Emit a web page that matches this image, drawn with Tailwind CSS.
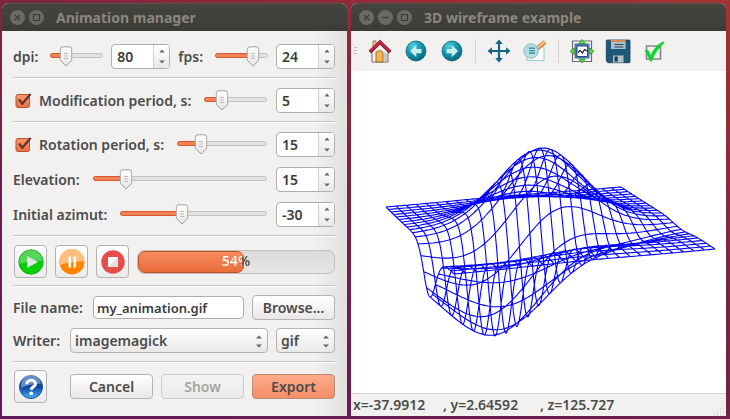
<!DOCTYPE html>
<html lang="en">
<head>
<meta charset="utf-8">
<title>Animation manager</title>
<script src="https://cdn.jsdelivr.net/npm/@tailwindcss/browser@4"></script>
</head>
<body class="flex min-h-screen gap-1 bg-[linear-gradient(20deg,#5f1a5c_0%,#6c1f4d_35%,#7d2540_60%,#a5322f_100%)] pt-[3px] pr-1 pb-1 pl-[2px] font-['Noto_Sans',sans-serif] text-[14px] leading-5 font-semibold text-[#4c4c4c]">

<svg class="absolute size-0" aria-hidden="true">
  <defs>
    <linearGradient id="gThumb" x1="0" y1="0" x2="0" y2="1"><stop offset="0" stop-color="#fff"/><stop offset="1" stop-color="#e4e4e3"/></linearGradient>
    <linearGradient id="gCheck" x1="0" y1="0" x2="0" y2="1"><stop offset="0" stop-color="#f79a73"/><stop offset="1" stop-color="#ee6d3f"/></linearGradient>
    <radialGradient id="gTeal" cx=".35" cy=".25" r=".8"><stop offset="0" stop-color="#4fd0dd"/><stop offset=".5" stop-color="#1397ad"/><stop offset="1" stop-color="#076379"/></radialGradient>
    <symbol id="thumb" viewBox="0 0 13 21">
      <path d="M3.5.8h6a2.8 2.8 0 0 1 2.8 2.8v10.6L6.500 20 .7 14.200V3.600A2.800 2.800 0 0 1 3.500.800z" fill="url(#gThumb)" stroke="#a09f9c"/>
      <path d="M4.500 7.500h4M4.500 10h4M4.500 12.500h4" stroke="#bcbbb8"/>
    </symbol>
    <symbol id="up" viewBox="0 0 6 4"><path d="M3 .4 5.600 3.400H.4z" fill="#666"/></symbol>
    <symbol id="down" viewBox="0 0 6 4"><path d="M3 3.600 5.800.5H.2z" fill="#666"/></symbol>
    <symbol id="updown" viewBox="0 0 6 13"><path d="M3 .6 6 3.500H0zM3 12.400 6 9.500H0z" fill="#666"/></symbol>
    <symbol id="tick" viewBox="0 0 17 17">
      <rect x="1" y="2.500" width="13.500" height="13" rx="2" fill="url(#gCheck)" stroke="#b4532f"/>
      <path d="M4 7.500l3.300 4.300L15.600 2" fill="none" stroke="#5d3629" stroke-width="2.200"/>
    </symbol>
    <symbol id="wclose" viewBox="0 0 15 15"><circle cx="7.500" cy="7.500" r="7.500" fill="#6a6964"/><path d="M5 5l5 5M10 5l-5 5" stroke="#3c3b37" stroke-width="1.300"/></symbol>
    <symbol id="wmin" viewBox="0 0 15 15"><circle cx="7.500" cy="7.500" r="7.500" fill="#6a6964"/><path d="M4 7.500h7" stroke="#3c3b37" stroke-width="1.300"/></symbol>
    <symbol id="wmax" viewBox="0 0 15 15"><circle cx="7.500" cy="7.500" r="7.500" fill="#6a6964"/><path d="M4.500 4.500h6v6h-6z" fill="none" stroke="#3c3b37" stroke-width="1.200"/></symbol>
  </defs>
</svg>

<section class="flex flex-[345] flex-col rounded-t-md bg-[#f2f1f0]">
  <header class="flex h-7 items-center gap-1 rounded-t-md border-t border-[#52514c] bg-linear-to-b from-[#45443f] to-[#3c3b37] pl-2">
    <button aria-label="Close" class="size-[15px]"><svg class="size-[15px]"><use href="#wclose"/></svg></button>
    <button aria-label="Maximize" class="size-[15px]"><svg class="size-[15px]"><use href="#wmax"/></svg></button>
    <h1 class="pl-2 font-bold text-[#8a8780]">Animation manager</h1>
  </header>

  <form class="flex flex-1 flex-col bg-[linear-gradient(to_right,transparent_90%,#e2e1e0)] pt-[13px] pr-3 pb-[11px] pl-[11px]" onsubmit="return false">
    <div class="flex h-[25px] items-center gap-2">
      <label for="dpi" class="pr-1">dpi:</label>
      <div class="relative h-[21px] flex-1">
        <div class="mt-[7px] h-[5px] rounded-full border border-[#c4c2be] bg-[#e3e2e0]"></div>
        <div class="absolute top-[7px] left-0 h-[5px] rounded-full border border-[#d2592c] bg-[#f58157]" style="width:30%"></div>
        <svg class="absolute top-0 h-[21px] w-[13px] -translate-x-1/2" style="left:30%"><use href="#thumb"/></svg>
        <input type="range" aria-label="dpi slider" value="30" class="absolute inset-0 w-full opacity-0">
      </div>
      <div class="flex h-[25px] w-[59px] overflow-hidden rounded border border-[#b0aeaa] bg-white">
        <input id="dpi" value="80" class="w-0 flex-1 pl-[5px] text-[#3c3c3c] outline-none">
        <div class="flex w-4 flex-col items-center justify-between border-l border-[#d0cfcc] bg-linear-to-b from-white to-[#e9e8e7] py-1">
          <button aria-label="Increase" class="flex"><svg class="h-1 w-[6px]"><use href="#up"/></svg></button>
          <button aria-label="Decrease" class="flex"><svg class="h-1 w-[6px]"><use href="#down"/></svg></button>
        </div>
      </div>
      <label for="fps" class="pr-1">fps:</label>
      <div class="relative h-[21px] flex-1">
        <div class="mt-[7px] h-[5px] rounded-full border border-[#c4c2be] bg-[#e3e2e0]"></div>
        <div class="absolute top-[7px] left-0 h-[5px] rounded-full border border-[#d2592c] bg-[#f58157]" style="width:72%"></div>
        <svg class="absolute top-0 h-[21px] w-[13px] -translate-x-1/2" style="left:72%"><use href="#thumb"/></svg>
        <input type="range" aria-label="fps slider" value="72" class="absolute inset-0 w-full opacity-0">
      </div>
      <div class="flex h-[25px] w-[59px] overflow-hidden rounded border border-[#b0aeaa] bg-white">
        <input id="fps" value="24" class="w-0 flex-1 pl-[5px] text-[#3c3c3c] outline-none">
        <div class="flex w-4 flex-col items-center justify-between border-l border-[#d0cfcc] bg-linear-to-b from-white to-[#e9e8e7] py-1">
          <button aria-label="Increase" class="flex"><svg class="h-1 w-[6px]"><use href="#up"/></svg></button>
          <button aria-label="Decrease" class="flex"><svg class="h-1 w-[6px]"><use href="#down"/></svg></button>
        </div>
      </div>
    </div>

    <hr class="mt-2 mb-[9px] h-[2px] border-t border-b border-t-[#c6c4c1] border-b-white">

    <div class="flex h-[25px] items-center gap-[9px]">
      <label class="relative flex items-center gap-[7px] pr-1 pl-[2px]">
        <input type="checkbox" checked class="absolute size-4 opacity-0">
        <svg class="size-[17px]"><use href="#tick"/></svg>
        Modification period, s:
      </label>
      <div class="relative h-[21px] flex-1">
        <div class="mt-[7px] h-[5px] rounded-full border border-[#c4c2be] bg-[#e3e2e0]"></div>
        <div class="absolute top-[7px] left-0 h-[5px] rounded-full border border-[#d2592c] bg-[#f58157]" style="width:28%"></div>
        <svg class="absolute top-0 h-[21px] w-[13px] -translate-x-1/2" style="left:28%"><use href="#thumb"/></svg>
        <input type="range" aria-label="Modification period slider" value="28" class="absolute inset-0 w-full opacity-0">
      </div>
      <div class="flex h-[25px] w-[59px] overflow-hidden rounded border border-[#b0aeaa] bg-white">
        <input aria-label="Modification period" value="5" class="w-0 flex-1 pl-[5px] text-[#3c3c3c] outline-none">
        <div class="flex w-4 flex-col items-center justify-between border-l border-[#d0cfcc] bg-linear-to-b from-white to-[#e9e8e7] py-1">
          <button aria-label="Increase" class="flex"><svg class="h-1 w-[6px]"><use href="#up"/></svg></button>
          <button aria-label="Decrease" class="flex"><svg class="h-1 w-[6px]"><use href="#down"/></svg></button>
        </div>
      </div>
    </div>

    <hr class="mt-2 mb-[9px] h-[2px] border-t border-b border-t-[#c6c4c1] border-b-white">

    <div class="flex flex-col gap-[10px]">
      <div class="flex h-[25px] items-center gap-[9px]">
        <label class="relative flex items-center gap-[7px] pr-1 pl-[2px]">
          <input type="checkbox" checked class="absolute size-4 opacity-0">
          <svg class="size-[17px]"><use href="#tick"/></svg>
          Rotation period, s:
        </label>
        <div class="relative h-[21px] flex-1">
          <div class="mt-[7px] h-[5px] rounded-full border border-[#c4c2be] bg-[#e3e2e0]"></div>
          <div class="absolute top-[7px] left-0 h-[5px] rounded-full border border-[#d2592c] bg-[#f58157]" style="width:27%"></div>
          <svg class="absolute top-0 h-[21px] w-[13px] -translate-x-1/2" style="left:27%"><use href="#thumb"/></svg>
          <input type="range" aria-label="Rotation period slider" value="27" class="absolute inset-0 w-full opacity-0">
        </div>
        <div class="flex h-[25px] w-[59px] overflow-hidden rounded border border-[#b0aeaa] bg-white">
          <input aria-label="Rotation period" value="15" class="w-0 flex-1 pl-[5px] text-[#3c3c3c] outline-none">
          <div class="flex w-4 flex-col items-center justify-between border-l border-[#d0cfcc] bg-linear-to-b from-white to-[#e9e8e7] py-1">
            <button aria-label="Increase" class="flex"><svg class="h-1 w-[6px]"><use href="#up"/></svg></button>
            <button aria-label="Decrease" class="flex"><svg class="h-1 w-[6px]"><use href="#down"/></svg></button>
          </div>
        </div>
      </div>
      <div class="flex h-[25px] items-center gap-[9px]">
        <label for="elev" class="pr-1">Elevation:</label>
        <div class="relative h-[21px] flex-1">
          <div class="mt-[7px] h-[5px] rounded-full border border-[#c4c2be] bg-[#e3e2e0]"></div>
          <div class="absolute top-[7px] left-0 h-[5px] rounded-full border border-[#d2592c] bg-[#f58157]" style="width:19%"></div>
          <svg class="absolute top-0 h-[21px] w-[13px] -translate-x-1/2" style="left:19%"><use href="#thumb"/></svg>
          <input type="range" aria-label="Elevation slider" value="19" class="absolute inset-0 w-full opacity-0">
        </div>
        <div class="flex h-[25px] w-[59px] overflow-hidden rounded border border-[#b0aeaa] bg-white">
          <input id="elev" value="15" class="w-0 flex-1 pl-[5px] text-[#3c3c3c] outline-none">
          <div class="flex w-4 flex-col items-center justify-between border-l border-[#d0cfcc] bg-linear-to-b from-white to-[#e9e8e7] py-1">
            <button aria-label="Increase" class="flex"><svg class="h-1 w-[6px]"><use href="#up"/></svg></button>
            <button aria-label="Decrease" class="flex"><svg class="h-1 w-[6px]"><use href="#down"/></svg></button>
          </div>
        </div>
      </div>
      <div class="flex h-[25px] items-center gap-[9px]">
        <label for="azim" class="pr-1">Initial azimut:</label>
        <div class="relative h-[21px] flex-1">
          <div class="mt-[7px] h-[5px] rounded-full border border-[#c4c2be] bg-[#e3e2e0]"></div>
          <div class="absolute top-[7px] left-0 h-[5px] rounded-full border border-[#d2592c] bg-[#f58157]" style="width:42%"></div>
          <svg class="absolute top-0 h-[21px] w-[13px] -translate-x-1/2" style="left:42%"><use href="#thumb"/></svg>
          <input type="range" aria-label="Azimut slider" value="42" class="absolute inset-0 w-full opacity-0">
        </div>
        <div class="flex h-[25px] w-[59px] overflow-hidden rounded border border-[#b0aeaa] bg-white">
          <input id="azim" value="-30" class="w-0 flex-1 pl-[5px] text-[#3c3c3c] outline-none">
          <div class="flex w-4 flex-col items-center justify-between border-l border-[#d0cfcc] bg-linear-to-b from-white to-[#e9e8e7] py-1">
            <button aria-label="Increase" class="flex"><svg class="h-1 w-[6px]"><use href="#up"/></svg></button>
            <button aria-label="Decrease" class="flex"><svg class="h-1 w-[6px]"><use href="#down"/></svg></button>
          </div>
        </div>
      </div>
    </div>

    <hr class="my-2 h-[2px] border-t border-b border-t-[#c6c4c1] border-b-white">

    <div class="flex items-center gap-2">
      <button aria-label="Play" class="ml-px flex size-[33px] items-center justify-center rounded border border-[#b5b3af] bg-linear-to-b from-white to-[#ecebea]">
        <svg class="size-[26px]" viewBox="0 0 26 26">
          <defs><linearGradient id="gp" x1="0" y1="0" x2="0" y2="1"><stop offset="0" stop-color="#0fbf12"/><stop offset="1" stop-color="#04d404"/></linearGradient></defs>
          <circle cx="13" cy="13" r="12.200" fill="url(#gp)" stroke="#06a50a" stroke-width=".8"/>
          <path d="M1.500 13A11.500 11.500 0 0 1 24.500 12C19 11 9 12 1.500 15z" fill="#fff" fill-opacity=".3"/>
          <path d="M9 7l11 6-11 6z" fill="#e3e3e3"/>
        </svg>
      </button>
      <button aria-label="Pause" class="flex size-[33px] items-center justify-center rounded border border-[#b5b3af] bg-linear-to-b from-white to-[#ecebea]">
        <svg class="size-[26px]" viewBox="0 0 26 26">
          <circle cx="13" cy="13" r="12.500" fill="#ff8400"/>
          <path d="M.6 14.500A12.500 12.500 0 1 1 25.400 12.500C18 12 9 13 .6 16z" fill="#ffbe7d"/>
          <path d="M9.500 7.500h2.600v11H9.500zM14.500 7.500h2.600v11h-2.600z" fill="#fff"/>
        </svg>
      </button>
      <button aria-label="Stop" class="flex size-[33px] items-center justify-center rounded border border-[#b5b3af] bg-linear-to-b from-white to-[#ecebea]">
        <svg class="size-[26px]" viewBox="0 0 26 26">
          <circle cx="13" cy="13" r="11.700" fill="#e64c4c"/>
          <path d="M8 8h10v10H8z" fill="#e2e2e2"/><path d="M8 8h10L8 18z" fill="#fafafa"/>
        </svg>
      </button>
      <div role="progressbar" aria-label="Export progress" aria-valuenow="54" class="relative flex h-6 flex-1 rounded-[7px] border border-[#c2c0bd] bg-linear-to-b from-[#dcdbd9] to-[#e6e5e3]">
        <div class="rounded-[7px] border border-[#bf5329] bg-linear-to-b from-[#f78a5f] to-[#e96c39]" style="width:54%"></div>
        <span class="absolute inset-0 bg-[linear-gradient(to_right,#fff_53%,#4c4c4c_53%)] bg-clip-text text-center text-transparent">54%</span>
      </div>
    </div>

    <hr class="mt-[7px] mb-2 h-[2px] border-t border-b border-t-[#c6c4c1] border-b-white">

    <div class="flex items-center gap-2">
      <label for="file" class="pr-[2px]">File name:</label>
      <input id="file" value="my_animation.gif" class="h-[23px] w-0 flex-1 rounded border border-[#b0aeaa] bg-white pl-[3px] text-[13px] text-[#3c3c3c]">
      <button class="h-[25px] w-[83px] rounded border border-[#b5b3af] bg-linear-to-b from-white to-[#e9e8e7]">Browse...</button>
    </div>
    <div class="mt-2 flex items-center gap-2">
      <label for="writer" class="pr-[2px]">Writer:</label>
      <div class="relative flex-1">
        <select id="writer" class="h-[25px] w-full appearance-none rounded border border-[#b5b3af] bg-linear-to-b from-white to-[#e9e8e7] pl-1"><option>imagemagick</option></select>
        <svg class="pointer-events-none absolute top-[7px] right-[6px] h-[13px] w-[6px]"><use href="#updown"/></svg>
      </div>
      <div class="relative w-[59px]">
        <select aria-label="Format" class="h-[25px] w-full appearance-none rounded border border-[#b5b3af] bg-linear-to-b from-white to-[#e9e8e7] pl-1"><option>gif</option></select>
        <svg class="pointer-events-none absolute top-[7px] right-[6px] h-[13px] w-[6px]"><use href="#updown"/></svg>
      </div>
    </div>

    <hr class="mt-2 mb-[7px] h-[2px] border-t border-b border-t-[#c6c4c1] border-b-white">

    <div class="flex items-center gap-2">
      <button aria-label="Help" class="mr-auto ml-px flex size-[33px] items-center justify-center rounded border border-[#b5b3af] bg-linear-to-b from-white to-[#ecebea]">
        <svg class="size-[26px]" viewBox="0 0 26 26">
          <defs><linearGradient id="gh" x1="0" y1="0" x2="0" y2="1"><stop offset="0" stop-color="#1d57b0"/><stop offset=".5" stop-color="#0b46a6"/><stop offset="1" stop-color="#46b4f5"/></linearGradient></defs>
          <circle cx="13" cy="13" r="11.500" fill="url(#gh)" stroke="#1c4f9c"/>
          <path d="M3 12A10 10 0 0 1 23 10C16 9 10 11 3 14z" fill="#fff" fill-opacity=".35"/>
          <path d="M8.700 10.300C8.700 5 17.500 5 17.500 9.800c0 3-4.200 3-4.200 6" fill="none" stroke="#fff" stroke-width="3"/>
          <circle cx="13.200" cy="19.300" r="1.900" fill="#fff"/>
        </svg>
      </button>
      <button class="h-[25px] w-[83px] rounded border border-[#b5b3af] bg-linear-to-b from-white to-[#e9e8e7]">Cancel</button>
      <button disabled class="h-[25px] w-[83px] rounded border border-[#cfcdca] bg-linear-to-b from-[#f4f3f2] to-[#ebeae9] text-[#a5a4a2]">Show</button>
      <button class="h-[25px] w-[83px] rounded border border-[#b98a76] bg-linear-to-b from-[#fdab8b] to-[#f48e66]">Export</button>
    </div>
  </form>
</section>

<section class="flex flex-[375] flex-col rounded-t-md bg-[#f2f1f0]">
  <header class="flex h-7 items-center gap-1 rounded-t-md border-t border-[#52514c] bg-linear-to-b from-[#45443f] to-[#3c3b37] pl-2">
    <button aria-label="Close" class="size-[15px]"><svg class="size-[15px]"><use href="#wclose"/></svg></button>
    <button aria-label="Minimize" class="size-[15px]"><svg class="size-[15px]"><use href="#wmin"/></svg></button>
    <button aria-label="Maximize" class="size-[15px]"><svg class="size-[15px]"><use href="#wmax"/></svg></button>
    <h2 class="pl-2 font-bold text-[#8a8780]">3D wireframe example</h2>
  </header>

  <nav class="flex h-10 items-center gap-[10px] pl-[3px]" aria-label="Figure tools">
    <svg class="h-2 w-[3px]" viewBox="0 0 3 8"><path d="M0 .5h3M0 3.500h3M0 6.500h3" stroke="#bdbbb7"/></svg>
    <button aria-label="Home" class="w-[26px]"><svg class="size-[26px]" viewBox="0 0 26 26">
      <path d="M6 3h3v7H6z" fill="#f2d489" stroke="#8a5a3a" stroke-width=".8"/>
      <path d="M5 13 13 5.500l8 7.500v11H5z" fill="#f1f0ec" stroke="#6d6d68"/>
      <path d="M9 24v-9c0-3 7-3 7 0v9z" fill="#f4b649" stroke="#a06a28"/>
      <path d="M17 15h3v8.500h-3z" fill="#c8c8c4"/>
      <path d="M2.800 14 13 4.300 23.200 14" fill="none" stroke="#7c1025" stroke-width="3.600"/>
      <path d="M3.200 13.300 13 4l9.800 9.300" fill="none" stroke="#cf2747" stroke-width="2"/>
    </svg></button>
    <button aria-label="Back" class="w-[26px]"><svg class="size-[26px]" viewBox="0 0 26 26">
      <circle cx="13" cy="13" r="10" fill="url(#gTeal)" stroke="#0b6478" stroke-width=".8"/>
      <path d="M7 13l6.300-6v4H18.500v4.300H13.300v4z" fill="#c9eef0"/>
    </svg></button>
    <button aria-label="Forward" class="w-[26px]"><svg class="size-[26px]" viewBox="0 0 26 26">
      <circle cx="13" cy="13" r="10" fill="url(#gTeal)" stroke="#0b6478" stroke-width=".8"/>
      <path d="M19 13l-6.300-6v4H7.500v4.300h5.200v4z" fill="#c9eef0"/>
    </svg></button>
    <div class="h-6 w-px bg-[#d6d4d1]"></div>
    <button aria-label="Pan" class="w-[26px]"><svg class="size-[26px]" viewBox="0 0 26 26">
      <path d="M13 4v18M4 13h18" stroke="#136683" stroke-width="2.200"/>
      <path d="M13 1.500l3.800 4.500H9.200zM13 24.500l3.800-4.500H9.200zM1.500 13 6 9.200v7.600zM24.500 13 20 9.200v7.600z" fill="#136683"/>
    </svg></button>
    <button aria-label="Zoom" class="w-[26px]"><svg class="size-[26px]" viewBox="0 0 26 26">
      <path d="M5 9h17v13.500H5z" fill="#fbfdfd" stroke="#8fcbd6"/>
      <path d="M15 10.500 23 4" stroke="#c9813b" stroke-width="4.200"/><path d="M15 10 23 3.500" stroke="#f7bd78" stroke-width="2.400"/>
      <circle cx="9" cy="13" r="7.300" fill="#a9dbe2" fill-opacity=".85" stroke="#9fb9bd"/>
      <path d="M7 9.500h6v6.500H7z" fill="#3e9aaa"/><path d="M7 11.500h6M7 13.800h6" stroke="#c9ecf0" stroke-width=".8"/>
    </svg></button>
    <div class="h-6 w-px bg-[#d6d4d1]"></div>
    <button aria-label="Subplots" class="w-[26px]"><svg class="size-[26px]" viewBox="0 0 26 26">
      <path d="M3.500 3h19v20.500h-19z" fill="#f7f7f7" stroke="#6b6b6b" stroke-width="1.200"/>
      <path d="M5.500 5.500h15v15h-15z" fill="#4a74b5"/>
      <path d="M8 8h10.500v10.500H8z" fill="#fff" stroke="#2d4a7c"/>
      <path d="M9 14.500l2.200-2 2.300 2.600 2-3.600 2.300 1.500" fill="none" stroke="#111" stroke-width="1.100"/>
      <path d="M13 1.500l3.200 4H9.800zM13 25l3.200-4H9.800zM1 13.200l4.200-3.200v6.400zM25 13.200l-4.200-3.200v6.400z" fill="#63e048" stroke="#2c8a25" stroke-width=".8"/>
    </svg></button>
    <button aria-label="Save" class="w-[26px]"><svg class="size-[26px]" viewBox="0 0 26 26">
      <path d="M2.300 2h22q.7 0 .7.700v21.300q0 .7-.7.700H3L1.300 23V2.700q0-.7 1-.7z" fill="#1c5878" stroke="#123c56" stroke-width=".8"/>
      <path d="M6 3h14.500v8H6z" fill="#a9c0cf"/><path d="M5.500 2h15v2h-15z" fill="#d98a5c"/>
      <path d="M9.500 6.500h9M9.500 9h9" stroke="#2b4556" stroke-width="1.200"/>
      <path d="M8 17.500h10.500v7H8z" fill="#b5c3cc"/><path d="M9.500 18.500h3.200v5H9.500z" fill="#23394a"/>
    </svg></button>
    <button aria-label="Options" class="w-[26px]"><svg class="size-[26px]" viewBox="0 0 26 26">
      <path d="M5.500 8h14v13h-14z" fill="#f0f0ef" stroke="#858585" stroke-width="1.600"/>
      <path d="M3.500 12.500 7.200 12l2.600 5C12 12 16.500 5.500 22.500 3.500l1.200 1C18 9.500 13.500 16 10.800 23.500H9C7.500 19 5.800 15.500 3.500 12.500z" fill="#0bd62c"/>
    </svg></button>
  </nav>

  <div class="min-h-0 flex-1 bg-white">
    <svg class="h-full w-full" viewBox="0 0 375 322" role="img" aria-label="Wireframe surface"><path id="mesh" fill="none" stroke="#00f" stroke-width="1.100"/></svg>
  </div>

  <footer class="flex h-[23px] items-center border-t border-[#d3d1ce] pl-[2px]">
    <span class="w-[90px]">x=-37.9912</span><span class="w-[97px]">, y=2.64592</span><span>, z=125.727</span>
    <svg class="ml-auto size-3 self-end" viewBox="0 0 12 12"><path d="M9 2h1M6 5h1M9 5h1M3 8h1M6 8h1M9 8h1M0 11h1M3 11h1M6 11h1M9 11h1" stroke="#bdbbb7"/></svg>
  </footer>
</section>

<script>
// Difference of two Gaussians, drawn as a 24 x 24 wireframe in perspective.
const N = 24, FINE = 120, HEIGHT = 502;
const [left, back, right, front] = [[35, 136], [270, 116], [364, 178], [103, 203]];
const dx1 = back[0] - right[0], dx2 = front[0] - right[0], sx = left[0] - back[0] + right[0] - front[0];
const dy1 = back[1] - right[1], dy2 = front[1] - right[1], sy = left[1] - back[1] + right[1] - front[1];
const det = dx1 * dy2 - dx2 * dy1;
const g = (sx * dy2 - dx2 * sy) / det, h = (dx1 * sy - sx * dy1) / det;
const surface = (x, y) =>
  Math.exp(-(x * x + y * y) / 2) / (2 * Math.PI) -
  Math.exp(-(((x - 1) / 1.5) ** 2 + ((y - 1) / 0.5) ** 2) / 2) / (1.5 * Math.PI);
function project(u, v) {
  const w = 1 + g * u + h * v;
  const px = (left[0] + (back[0] * (1 + g) - left[0]) * u + (front[0] * (1 + h) - left[0]) * v) / w;
  const py = (left[1] + (back[1] * (1 + g) - left[1]) * u + (front[1] * (1 + h) - left[1]) * v) / w;
  return px.toFixed(1) + ' ' + (py - HEIGHT * surface(3 - 6 * u, 6 * v - 3) / w).toFixed(1);
}
let d = '';
for (let i = 0; i <= N; i++) {
  const across = [], along = [];
  for (let k = 0; k <= FINE; k++) {
    across.push(project(k / FINE, i / N));
    along.push(project(i / N, k / FINE));
  }
  d += 'M' + across.join('L') + 'M' + along.join('L');
}
document.getElementById('mesh').setAttribute('d', d);
</script>
</body>
</html>
